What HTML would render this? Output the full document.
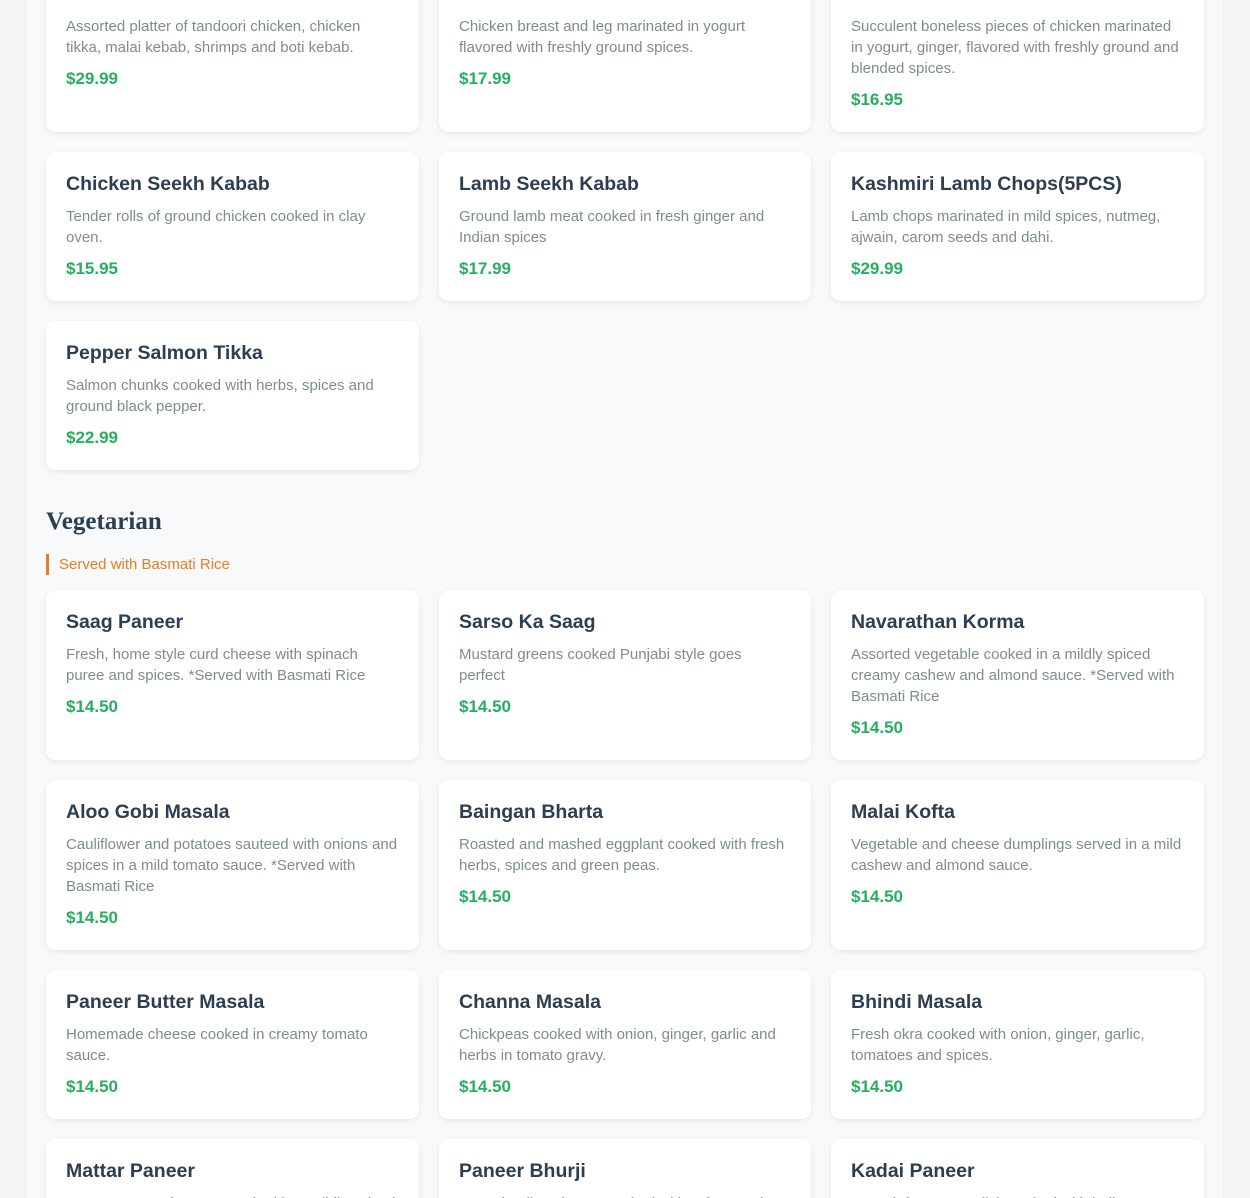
<!DOCTYPE html>
<html><head><meta charset="utf-8"><style>
*{box-sizing:border-box;margin:0;padding:0}
html,body{width:1250px;height:1198px;overflow:hidden;background:#f3f4f6;font-family:"Liberation Sans",sans-serif}
.wrap{position:absolute;left:25px;top:-80px;width:1199px;height:1278px;overflow:hidden;background:#f8f9fa;border-left:1px solid #eceef0;border-right:1px solid #eceef0;padding:42px 20px 0 20px}
.grid{display:grid;grid-template-columns:373px 372px 373px;column-gap:20px;row-gap:20px}
.card{background:#fff;border-radius:10px;box-shadow:0 2px 6px rgba(0,0,0,.07);padding:21px 20px 21px}
.card h3{font-size:19.5px;font-weight:bold;color:#2c3e50;line-height:22px;height:22px;margin-bottom:11px}
.card p{font-size:15px;color:#7f8c8d;line-height:21px;margin-bottom:10px}
.card .pr{font-size:17px;font-weight:bold;color:#27ae60;line-height:22px}
h2{font-family:"Liberation Serif",serif;font-size:25px;font-weight:bold;color:#2c3e50;margin:37px 0 0;line-height:30px}
.note{border-left:3px solid #e67e22;color:#e67e22;font-size:15px;padding-left:10px;line-height:21px;margin:17px 0 15px}
</style></head><body>
<div class="wrap">
<div class="grid">
<div class="card"><h3>Tandoori Mixed Grill</h3><p>Assorted platter of tandoori chicken, chicken tikka, malai kebab, shrimps and boti kebab.</p><div class="pr">$29.99</div></div>
<div class="card"><h3>Tandoori Chicken</h3><p>Chicken breast and leg marinated in yogurt flavored with freshly ground spices.</p><div class="pr">$17.99</div></div>
<div class="card"><h3>Chicken Tikka</h3><p>Succulent boneless pieces of chicken marinated in yogurt, ginger, flavored with freshly ground and blended spices.</p><div class="pr">$16.95</div></div>
<div class="card"><h3>Chicken Seekh Kabab</h3><p>Tender rolls of ground chicken cooked in clay oven.</p><div class="pr">$15.95</div></div>
<div class="card"><h3>Lamb Seekh Kabab</h3><p>Ground lamb meat cooked in fresh ginger and Indian spices</p><div class="pr">$17.99</div></div>
<div class="card"><h3>Kashmiri Lamb Chops(5PCS)</h3><p>Lamb chops marinated in mild spices, nutmeg, ajwain, carom seeds and dahi.</p><div class="pr">$29.99</div></div>
<div class="card"><h3>Pepper Salmon Tikka</h3><p>Salmon chunks cooked with herbs, spices and ground black pepper.</p><div class="pr">$22.99</div></div>
</div>
<h2>Vegetarian</h2>
<div class="note">Served with Basmati Rice</div>
<div class="grid">
<div class="card"><h3>Saag Paneer</h3><p>Fresh, home style curd cheese with spinach puree and spices. *Served with Basmati Rice</p><div class="pr">$14.50</div></div>
<div class="card"><h3>Sarso Ka Saag</h3><p>Mustard greens cooked Punjabi style goes perfect</p><div class="pr">$14.50</div></div>
<div class="card"><h3>Navarathan Korma</h3><p>Assorted vegetable cooked in a mildly spiced creamy cashew and almond sauce. *Served with Basmati Rice</p><div class="pr">$14.50</div></div>
<div class="card"><h3>Aloo Gobi Masala</h3><p>Cauliflower and potatoes sauteed with onions and spices in a mild tomato sauce. *Served with Basmati Rice</p><div class="pr">$14.50</div></div>
<div class="card"><h3>Baingan Bharta</h3><p>Roasted and mashed eggplant cooked with fresh herbs, spices and green peas.</p><div class="pr">$14.50</div></div>
<div class="card"><h3>Malai Kofta</h3><p>Vegetable and cheese dumplings served in a mild cashew and almond sauce.</p><div class="pr">$14.50</div></div>
<div class="card"><h3>Paneer Butter Masala</h3><p>Homemade cheese cooked in creamy tomato sauce.</p><div class="pr">$14.50</div></div>
<div class="card"><h3>Channa Masala</h3><p>Chickpeas cooked with onion, ginger, garlic and herbs in tomato gravy.</p><div class="pr">$14.50</div></div>
<div class="card"><h3>Bhindi Masala</h3><p>Fresh okra cooked with onion, ginger, garlic, tomatoes and spices.</p><div class="pr">$14.50</div></div>
<div class="card"><h3>Mattar Paneer</h3><p>Green peas and paneer cooked in a mildly spiced sauce.</p><div class="pr">$14.50</div></div>
<div class="card"><h3>Paneer Bhurji</h3><p>Grated Indian cheese cooked with onions and spices.</p><div class="pr">$14.50</div></div>
<div class="card"><h3>Kadai Paneer</h3><p>A semi-dry paneer dish cooked with bell peppers and spices.</p><div class="pr">$14.50</div></div>
</div>
</div>
</body></html>
